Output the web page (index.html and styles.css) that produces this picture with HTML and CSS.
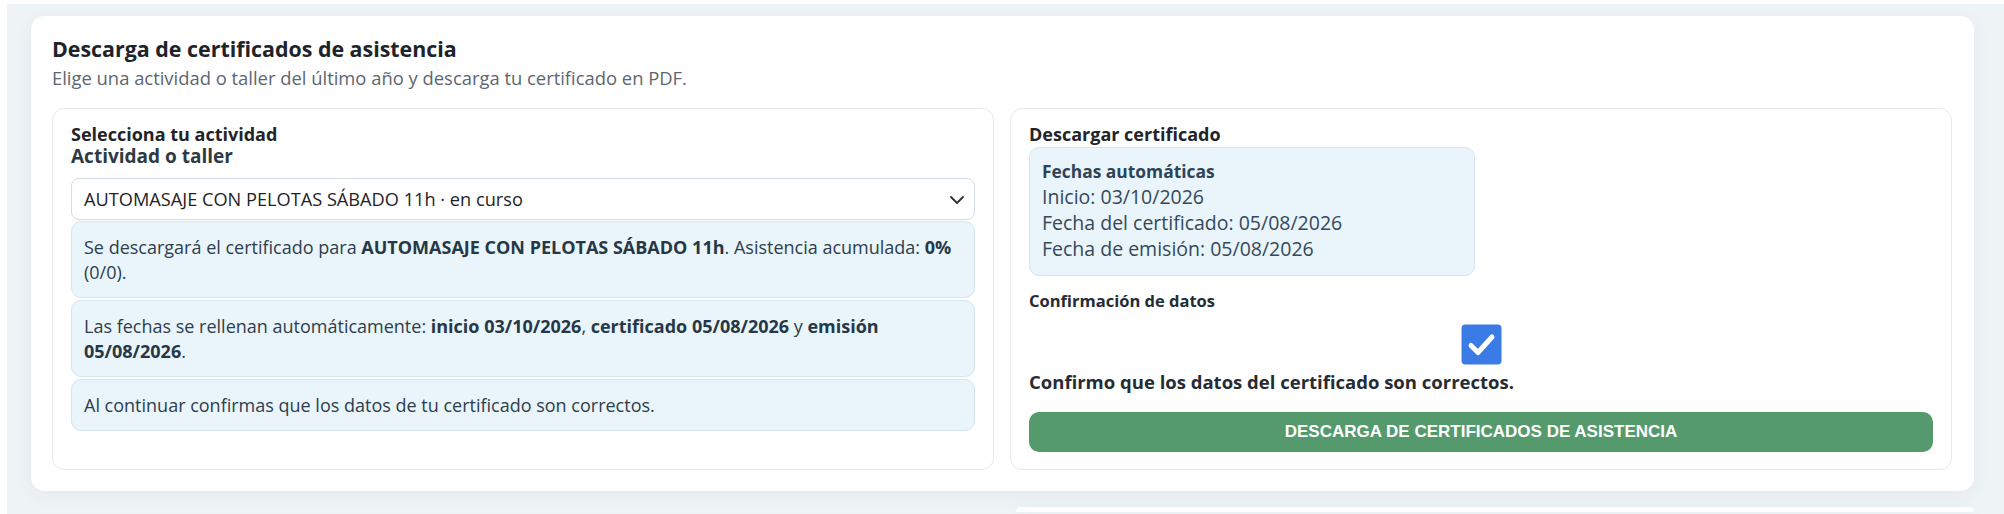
FILE: index.html
```html
<!DOCTYPE html>
<html lang="es">
<head>
    <meta charset="UTF-8">
    <meta name="viewport" content="width=device-width, initial-scale=1.0">
    <title>Certificados de asistencia</title>
    <link rel="stylesheet" href="styles.css">
</head>
<body>
    <div class="page">
        <section class="card">
            <h2 class="card-title">Descarga de certificados de asistencia</h2>
            <p class="card-sub">Elige una actividad o taller del último año y descarga tu certificado en PDF.</p>

            <div class="cols">
                <div class="panel">
                    <h3 class="panel-title">Selecciona tu actividad</h3>
                    <label class="field-label" for="actividad">Actividad o taller</label>
                    <div class="select-wrap">
                        <select id="actividad" class="select">
                            <option>AUTOMASAJE CON PELOTAS SÁBADO 11h · en curso</option>
                        </select>
                        <svg class="chevron" width="16" height="10" viewBox="0 0 16 10" aria-hidden="true">
                            <path d="M2 2l6 6 6-6" fill="none" stroke="#2b3036" stroke-width="1.8" stroke-linecap="round" stroke-linejoin="round"/>
                        </svg>
                    </div>

                    <div class="notes">
                        <div class="note">Se descargará el certificado para <b>AUTOMASAJE CON PELOTAS SÁBADO 11h</b>. Asistencia acumulada: <b>0%</b> (0/0).</div>
                        <div class="note">Las fechas se rellenan automáticamente: <b>inicio 03/10/2026</b>, <b>certificado 05/08/2026</b> y <b>emisión</b> <b>05/08/2026</b>.</div>
                        <div class="note">Al continuar confirmas que los datos de tu certificado son correctos.</div>
                    </div>
                </div>

                <div class="panel">
                    <h3 class="panel-title">Descargar certificado</h3>
                    <div class="dates">
                        <div class="dates-title">Fechas automáticas</div>
                        <div>Inicio: 03/10/2026</div>
                        <div>Fecha del certificado: 05/08/2026</div>
                        <div>Fecha de emisión: 05/08/2026</div>
                    </div>

                    <div class="confirm-title">Confirmación de datos</div>
                    <label class="confirm">
                        <svg class="checkbox" width="41" height="41" viewBox="0 0 41 41" aria-hidden="true">
                            <rect x="0.5" y="0.5" width="40" height="40" rx="4" fill="#3a7be6"/>
                            <path d="M10 21.5l7 7L31 13" fill="none" stroke="#fff" stroke-width="5" stroke-linecap="round" stroke-linejoin="round"/>
                        </svg>
                        <span class="confirm-text">Confirmo que los datos del certificado son correctos.</span>
                    </label>

                    <button type="button" class="btn">DESCARGA DE CERTIFICADOS DE ASISTENCIA</button>
                </div>
            </div>
        </section>

        <div class="next-row">
            <div></div>
            <section class="card card-next"></section>
        </div>
    </div>
</body>
</html>
```

FILE: styles.css
```css
body {
    margin: 0;
    background-color: #ffffff;
    font-family: "Open Sans", "Noto Sans", Arial, sans-serif;
    color: #2d3e4c;
}

.page {
    margin: 4px 0 0 7px;
    padding: 12px 30px 0 24px;
    min-height: calc(100vh - 16px);
    background-color: #eef3f6;
}

.card {
    background-color: #ffffff;
    border-radius: 14px;
    padding: 20px 22px 21px 21px;
    box-shadow: 0 4px 18px rgba(30, 60, 90, 0.06);
}

.card-title {
    margin: 0;
    font-size: 21.4px;
    line-height: 26px;
    font-weight: 700;
    color: #1d2329;
}

.card-sub {
    margin: 4px 0 18px;
    font-size: 18.4px;
    line-height: 24px;
    color: #5d6670;
}

.cols {
    display: grid;
    grid-template-columns: 1fr 1fr;
    gap: 16px;
}

.panel {
    border: 1px solid #e4eaee;
    border-radius: 12px;
    padding: 14px 18px 17px;
    display: flex;
    flex-direction: column;
}

.panel-title {
    margin: 0;
    font-size: 18px;
    line-height: 22px;
    font-weight: 700;
    color: #1f2429;
}

.field-label {
    font-size: 19px;
    line-height: 22px;
    font-weight: 700;
    color: #2d3a44;
}

.select-wrap {
    position: relative;
    margin-top: 11px;
}

.select {
    width: 100%;
    height: 42px;
    padding: 0 40px 0 12px;
    border: 1px solid #d3dce3;
    border-radius: 8px;
    background-color: #ffffff;
    font-family: inherit;
    font-size: 18.2px;
    color: #1f2328;
    appearance: none;
    -webkit-appearance: none;
}

.chevron {
    position: absolute;
    right: 10px;
    top: 17px;
    pointer-events: none;
}

.notes {
    display: flex;
    flex-direction: column;
    gap: 2px;
    margin-top: 1px;
}

.note {
    background-color: #eaf4fb;
    border: 1px solid #d5e6f1;
    border-radius: 10px;
    padding: 13px 12px 12px;
    font-size: 18px;
    line-height: 25px;
    color: #2d3e4c;
}

.note b {
    color: #263846;
}

.dates {
    width: 446px;
    box-sizing: border-box;
    margin-top: 2px;
    padding: 10px 12px 13px;
    background-color: #eaf4fb;
    border: 1px solid #d5e6f1;
    border-radius: 10px;
    font-size: 19.5px;
    line-height: 26px;
    color: #34495a;
}

.dates-title {
    font-size: 17.4px;
    font-weight: 700;
    color: #2e4456;
}

.confirm-title {
    margin-top: 14px;
    font-size: 16.5px;
    line-height: 22px;
    font-weight: 700;
    color: #252c33;
}

.confirm {
    display: flex;
    flex-direction: column;
    align-items: stretch;
}

.checkbox {
    display: block;
    margin: 12px auto 0;
}

.confirm-text {
    margin-top: 6px;
    font-size: 18.5px;
    line-height: 22px;
    font-weight: 700;
    color: #252c33;
}

.btn {
    margin-top: 19px;
    height: 40px;
    width: 100%;
    border: none;
    border-radius: 10px;
    background-color: #559a6c;
    color: #ffffff;
    font-family: "Liberation Sans", Arial, sans-serif;
    font-size: 17px;
    font-weight: 700;
    cursor: pointer;
}

.next-row {
    display: grid;
    grid-template-columns: 1fr 1fr;
    gap: 26px;
    margin-top: 16px;
}

.card-next {
    height: 5px;
    border-radius: 14px 14px 0 0;
    padding: 0;
}
```
